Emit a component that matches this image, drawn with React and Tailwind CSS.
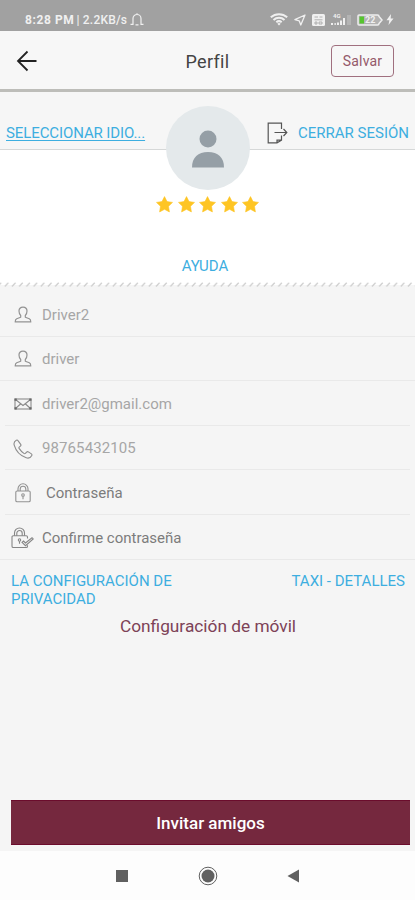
const UserIcon = () => (
  <svg width="18" height="18" viewBox="0 0 18 18" fill="none" stroke="#939393" strokeWidth="1.2" strokeLinejoin="round">
    <path d="M9 1.2c-2.500 0-4 1.500-4 3.900 0 2 .7 3.400 1.700 4.400v1.700l-4 1.600c-1.100.5-1.500 1.300-1.500 3.100h15.600c0-1.800-.4-2.600-1.500-3.100l-4-1.600V9.500c1-1 1.700-2.400 1.700-4.400 0-2.400-1.500-3.900-4-3.900z" />
  </svg>
)

const MailIcon = () => (
  <svg width="18" height="12" viewBox="0 0 18 12" fill="none" stroke="#8a8a8a" strokeWidth="1.1">
    <rect x="1" y="1" width="16" height="10" />
    <path d="M1.500 1.500 9 7.500l7.500-6M1.500 10.500l5-4.500M16.500 10.500l-5-4.500" />
    <path d="M.5.500h2.200v2.200H.5zM15.300.500h2.200v2.200h-2.200zM.5 9.300h2.200v2.200H.5zM15.300 9.300h2.200v2.200h-2.200z" fill="#666" stroke="none" />
  </svg>
)

const PhoneIcon = () => (
  <svg width="20" height="20" viewBox="0 0 20 20" fill="none" stroke="#8d8d8d" strokeWidth="1.1" strokeLinejoin="round">
    <path d="M3.300 1.200C1.300 2.300.6 4 1.200 6.200c1.700 5.800 6 10.600 12 12.600 2.200.7 4.400 0 5.600-2.300.3-.6.100-1.200-.4-1.600l-3-2c-.7-.4-1.300-.3-1.800.2l-1.200 1.300c-.5.400-1 .4-1.500 0-1.900-1.300-3.500-3-4.800-5-.3-.5-.3-.9.100-1.300l1.200-1c.6-.5.7-1.100.3-1.700L5 1.600c-.4-.6-1-.8-1.700-.4z" />
  </svg>
)

const LockIcon = () => (
  <svg width="16" height="20" viewBox="0 0 16 20" fill="none" stroke="#929292" strokeWidth="1.1">
    <rect x=".8" y="8" width="14.400" height="10.800" rx="1.300" />
    <path d="M3 8V5.800a5 5 0 0 1 10 0V8M5.200 8V6a2.800 2.800 0 0 1 5.600 0v2" />
    <circle cx="8" cy="12" r="1.300" />
    <path d="M8 13.300v3" />
  </svg>
)

const LockCheckIcon = () => (
  <svg width="23" height="22" viewBox="0 0 23 22" fill="none" stroke="#868686" strokeWidth="1.100">
    <path d="M16.500 11.500V10a1.300 1.300 0 0 0-1.300-1.300H2.300A1.300 1.300 0 0 0 1 10v9.200a1.300 1.300 0 0 0 1.300 1.300h12.900a1.300 1.300 0 0 0 1.300-1.300v-1" />
    <path d="M3.500 8.700V6a5 5 0 0 1 10 0v2.700M5.800 8.700V6.200a2.700 2.700 0 0 1 5.400 0v2.500" />
    <circle cx="8.500" cy="13" r="1.200" />
    <path d="M8.500 14.200v2.500M11 15.300l1.500-1.300 2 2 6.500-5.300 1.200 1.200-7.700 6.800z" />
  </svg>
)

const LogoutIcon = () => (
  <svg width="21" height="22" viewBox="0 0 21 22" fill="none" stroke="#555" strokeWidth="1.200">
    <path d="M14.500 7V1.200H1.200v19.600H10l4.500-2.600v-4.700M10 20.500v-2.300h4.500" />
    <path d="M7.500 10.500h12.300M16.500 7l3.300 3.500-3.300 3.500" />
  </svg>
)

const StarIcon = () => (
  <svg width="17" height="17" viewBox="0 0 17 17" fill="#fec524">
    <path d="m8.500.6 2.500 5 5.500.8-4 3.900.9 5.600-4.900-2.600-4.900 2.600.9-5.600-4-3.900 5.500-.8z" stroke="#fec524" strokeWidth=".6" strokeLinejoin="round" />
  </svg>
)

const fields = [
  { text: 'Driver2', icon: UserIcon, tone: 'text-[#a6a6a6]', line: '' },
  { text: 'driver', icon: UserIcon, tone: 'text-[#a6a6a6]', line: '' },
  { text: 'driver2@gmail.com', icon: MailIcon, tone: 'text-[#a6a6a6]', line: 'mx-[5px] pl-[5px]' },
  { text: '98765432105', icon: PhoneIcon, tone: 'text-[#a6a6a6] tracking-[0.1px]', line: 'mx-[5px] pl-[5px]' },
  { text: 'Contraseña', icon: LockIcon, tone: 'text-[#7c7c7c] pl-1', line: 'mx-[5px] pl-[5px]' },
  { text: 'Confirme contraseña', icon: LockCheckIcon, tone: 'text-[#7c7c7c]', line: '' },
]

const StatusBar = () => (
  <div className="h-[31px] bg-[#a1a1a1] flex items-center justify-between pl-[25px] pr-[21px] pt-[8px] text-[#f0f0f0]">
    <div className="flex items-center">
      <span className="text-[12px] leading-4 font-bold tracking-[0.6px]">8:28 PM</span>
      <span className="text-[12px] leading-4 font-medium ml-[2px] tracking-[0.2px]">| 2.2KB/s</span>
      <svg className="ml-[3px]" width="14" height="13" viewBox="0 0 14 13" fill="none" stroke="currentColor" strokeWidth="1.200">
        <path d="M.5 11.300H3V5.500a4 4 0 0 1 8 0v5.800h2.500M5.500 11.800h3M7 1.500V.3" />
      </svg>
    </div>
    <div className="flex items-center">
      <svg width="18" height="13" viewBox="0 0 18 13" fill="none" stroke="currentColor" strokeWidth="2">
        <path d="M.8 4.300C5.500.1 12.500.1 17.200 4.300M3.500 6.900c3.200-2.900 7.800-2.900 11 0M6.300 9.300c1.600-1.400 3.800-1.400 5.400 0" />
        <path d="m7.300 10.700 1.700 1.800 1.700-1.800c-1-.8-2.400-.8-3.400 0z" fill="currentColor" stroke="none" />
      </svg>
      <svg className="ml-[6px]" width="12" height="12" viewBox="0 0 12 12" fill="none" stroke="currentColor" strokeWidth="1.300" strokeLinejoin="round">
        <path d="M11 1 .9 5.600l4.300 1.200L6.800 11z" />
      </svg>
      <svg className="ml-[6px]" width="13" height="12" viewBox="0 0 13 12">
        <rect width="13" height="12" rx="1.500" fill="currentColor" />
        <path d="M2.500 3h3.500M7.500 3h3M2.500 5.800h8M3 8h2v2H3zM7 8h3v2H7z" fill="none" stroke="#a1a1a1" strokeWidth=".8" />
      </svg>
      <div className="relative ml-[5px] w-[22px] h-[13px]">
        <svg width="22" height="13" viewBox="0 0 22 13" fill="currentColor">
          <path d="M1 10h2v2H1zM4.500 10h1.300v2H4.500zM7 9.500h2V12H7zM10 7.500h2V12h-2zM13 5h2v7h-2z" />
          <path d="M17 2h4v10h-4z" opacity=".25" />
        </svg>
        <span className="absolute left-[3px] -top-px text-[6px] leading-[7px] font-bold">4G</span>
      </div>
      <div className="relative ml-[5px] w-[26px] h-[12px]">
        <svg width="26" height="12" viewBox="0 0 26 12">
          <path d="M2 1h18.500a1.500 1.500 0 0 1 1.500 1.500L25 6l-3 3.500a1.500 1.500 0 0 1-1.500 1.500H2a1 1 0 0 1-1-1V2a1 1 0 0 1 1-1z" fill="#b3b3b3" stroke="#eee" strokeWidth="1.500" />
          <rect x="2.500" y="2.500" width="4.500" height="7" fill="#56c52e" />
        </svg>
        <span className="absolute left-[8px] top-[2px] text-[9px] leading-[8px] font-bold">22</span>
      </div>
      <svg className="ml-[3px]" width="8" height="11" viewBox="0 0 8 11" fill="currentColor">
        <path d="M5 0 .5 6.200h2.800L2.500 11 7.500 4.500H4.700z" />
      </svg>
    </div>
  </div>
)

const Header = () => (
  <header className="h-[61px] bg-[#f7f7f7] border-b-[3px] border-[#bdbdb9] flex items-center justify-between pl-[16px] pr-[21px]">
    <svg className="mt-[2px]" width="63" height="22" viewBox="0 0 63 22" fill="none" stroke="#222" strokeWidth="1.800">
      <path d="M20.500 11H2M11.500 1.500 2 11l9.500 9.500" />
    </svg>
    <h1 className="text-[18px] leading-6 text-[#444] tracking-[0.300px] pt-[3px] pl-[5px]">Perfil</h1>
    <button className="w-[63px] h-8 mt-px rounded-[4px] border border-[#a0707f] text-[#94596a] text-[14px] tracking-[0.2px] pt-[2px]">Salvar</button>
  </header>
)

const App = () => {
  return (
    <div className="w-full h-[900px] bg-[#f5f5f5] flex flex-col overflow-hidden font-['Roboto',sans-serif]">
      <StatusBar />
      <Header />

      <section className="relative h-[190px] shrink-0 bg-white">
        <div className="h-[58px] bg-[#f6f6f6] border-b border-[#d6d8d8] flex items-center justify-between pl-[6px] pr-[6px] pt-[24px] text-[#3daee0]">
          <a className="w-[140px] text-[15px] leading-5 tracking-[-0.100px] underline underline-offset-2 decoration-1 whitespace-nowrap">SELECCIONAR IDIO...</a>
          <div className="flex items-center gap-[10px]">
            <LogoutIcon />
            <span className="text-[15px] leading-5 whitespace-nowrap">CERRAR SESIÓN</span>
          </div>
        </div>
        <div className="absolute top-[14px] left-[166px] w-[84px] h-[84px] rounded-full bg-[#e4e9eb] flex items-center justify-center">
          <svg className="mt-[2px]" width="32" height="38" viewBox="0 0 32 38" fill="#959fa6">
            <circle cx="16" cy="9" r="8.500" />
            <path d="M0 37.500c0-10 6-15.500 16-15.500s16 5.500 16 15.500z" />
          </svg>
        </div>
        <div className="flex justify-center gap-[4.500px] pt-[46px]">
          {[1, 2, 3, 4, 5].map((n) => (
            <StarIcon key={n} />
          ))}
        </div>
        <p className="text-center text-[15px] leading-5 text-[#3daee0] mt-[43px] -ml-[5px]">AYUDA</p>
      </section>

      {/* stitched edge under the white card */}
      <svg className="shrink-0 w-full" height="5" fill="none">
        <defs>
          <pattern id="stitch" width="7.200" height="5" patternUnits="userSpaceOnUse" x="4">
            <path d="M.8 4.500 4.300.8" stroke="#d0d0d0" strokeWidth="1.400" />
          </pattern>
        </defs>
        <rect width="100%" height="3" fill="#fff" />
        <rect width="100%" height="5" fill="url(#stitch)" />
      </svg>

      <ul className="pt-[5px] shrink-0">
        {fields.map(({ text, icon: Icon, tone, line }) => (
          <li key={text} className={`h-[44.600px] flex items-center border-b border-[#e9e9e9] text-[15px] pt-[2px] ${line || 'pl-[10px]'}`}>
            <span className="w-[25px] mr-[7px] flex justify-center">
              <Icon />
            </span>
            <span className={tone}>{text}</span>
          </li>
        ))}
      </ul>

      <div className="flex justify-between items-start pl-[11px] pr-[10px] mt-[12px] text-[15px] leading-[18px] text-[#3daee0]">
        <a className="w-[175px]">LA CONFIGURACIÓN DE PRIVACIDAD</a>
        <a>TAXI - DETALLES</a>
      </div>
      <p className="text-center text-[17.300px] leading-6 text-[#7d4257] mt-[6px] pl-px">Configuración de móvil</p>

      <div className="mt-auto pl-[11px] pr-[5px] pb-[6px]">
        <button className="block w-full h-[45px] bg-[#75283e] border-y border-[#6b0c2c] text-white text-[17px] font-medium pt-[2px]">Invitar amigos</button>
      </div>

      <nav className="h-[49px] shrink-0 bg-[#fdfdfd] flex justify-center items-center">
        <svg width="184" height="20" viewBox="0 0 184 20" fill="#606060">
          <rect x="0" y="4" width="12" height="12" />
          <circle cx="92" cy="10" r="6.500" />
          <circle cx="92" cy="10" r="8.800" fill="none" stroke="#606060" strokeWidth="1" />
          <path d="M183 3.500v13l-11.500-6.500z" />
        </svg>
      </nav>
    </div>
  )
}

export default App
